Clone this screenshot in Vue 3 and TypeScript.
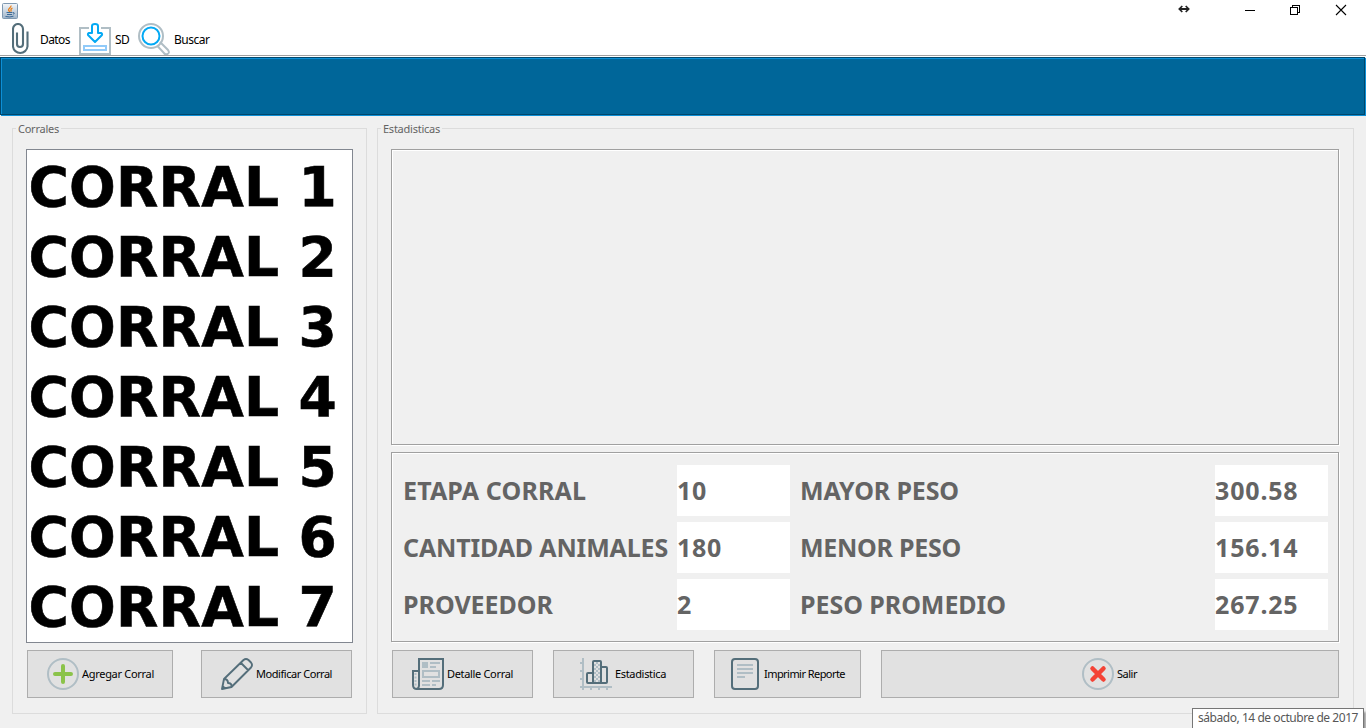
<script setup lang="ts">
import type { Directive } from 'vue'

const corrales = [1, 2, 3, 4, 5, 6, 7].map(n => `CORRAL ${n}`)
const rows = [
  { l: 'ETAPA CORRAL', lw: 183, v: '10', vw: 30, r: 'MAYOR PESO', rw: 159, n: '300.58' },
  { l: 'CANTIDAD ANIMALES', lw: 265, v: '180', vw: 45, r: 'MENOR PESO', rw: 161, n: '156.14' },
  { l: 'PROVEEDOR', lw: 150, v: '2', vw: 15, r: 'PESO PROMEDIO', rw: 206, n: '267.25' },
]

// Adjusts tracking so that a label takes the given width in pixels.
const vFit: Directive<HTMLElement, number> = {
  mounted(el, binding) {
    const natural = el.getBoundingClientRect().width
    const count = (el.textContent ?? '').trim().length
    el.style.letterSpacing = `${(binding.value - natural) / count}px`
  },
}
</script>

<template>
  <div class="window">
    <header class="top">
      <div class="titlebar">
        <svg class="java" width="16" height="16" viewBox="0 0 16 16">
          <defs><linearGradient id="jg" x1="0" y1="0" x2="0" y2="1"><stop offset="0" stop-color="#f4f7fa" /><stop offset="1" stop-color="#9fb4c9" /></linearGradient></defs>
          <rect x=".5" y=".5" width="15" height="15" rx="1" fill="url(#jg)" stroke="#7f98b0" />
          <path d="M9 2.500C9.500 4.500 6 5.300 6.500 7.200Q7 8 8 9M10.500 5C8 6 9 7 9.200 8.500" fill="none" stroke="#e8821e" stroke-width="1.300" />
          <path d="M4.500 9.500h6M5 11.500h5M3.500 13.500q4.500 1 8-.3M11 9.500q2.500 0 .3 2" fill="none" stroke="#3d6a96" />
        </svg>
        <svg class="controls" width="170" height="16" viewBox="1177 2 170 16" fill="none" stroke="#000" shape-rendering="crispEdges">
          <path d="M1180 9h8" stroke="#222" stroke-width="2" />
          <path d="M1182.300 6l-3 3l3 3M1185.700 6l3 3l-3 3" stroke="#222" stroke-width="1.700" shape-rendering="auto" />
          <path d="M1245 10.500h10" />
          <path d="M1290.500 7.500h7v7h-7zM1292.500 7v-1.500h7v7h-1.500" />
          <path d="M1336 5l10 10M1346 5l-10 10" shape-rendering="auto" stroke-width="1.100" />
        </svg>
      </div>
      <nav class="toolbar">
        <span class="tool datos">
          <svg width="18" height="32" viewBox="0 0 18 32" fill="none" stroke="#546e7a" stroke-width="2.100">
            <path d="M5 9.500v11.500a3 3 0 0 0 6 0V6a5 5 0 0 0-10 0v17.500a7.300 7.300 0 0 0 14.500 0V8.500" />
          </svg>
          <b v-fit="30">Datos</b>
        </span>
        <span class="tool sd">
          <svg width="32" height="32" viewBox="0 0 32 32" fill="none" stroke-width="2">
            <path d="M10 5H1v26h30V5h-9" stroke="#b0bec5" />
            <path d="M5 23h22v4H5z" stroke="#90caf9" />
            <path d="M13 10V3q0-2 3-2t3 2v7h3q2 1 .5 2.500L16 19l-6.500-6.500Q8 11 10 10z" stroke="#03a9f4" stroke-linejoin="round" />
          </svg>
          <b v-fit="14">SD</b>
        </span>
        <span class="tool buscar">
          <svg width="32" height="32" viewBox="0 0 32 32" fill="none" stroke-width="2">
            <path d="M22 19l8 8q2 3-.5 4T26 30l-7-7.500" stroke="#b0bec5" />
            <circle cx="13" cy="13" r="12" stroke="#b0bec5" />
            <circle cx="13" cy="13" r="8.500" stroke="#03a9f4" />
          </svg>
          <b v-fit="35.5">Buscar</b>
        </span>
      </nav>
    </header>
    <div class="banner"></div>

    <main>
      <fieldset class="corrales">
        <legend><span v-fit="41">Corrales</span></legend>
        <ul>
          <li v-for="c in corrales" :key="c"><span v-fit="308.5">{{ c }}</span></li>
        </ul>
        <div class="buttons">
          <button class="agregar">
            <svg width="32" height="32" viewBox="0 0 32 32" fill="none">
              <circle cx="16" cy="16" r="15" stroke="#b0bec5" stroke-width="2" />
              <path d="M16 8v16M8 16h16" stroke="#8bc34a" stroke-width="4" stroke-linecap="round" />
            </svg>
            <span v-fit="72">Agregar Corral</span>
          </button>
          <button class="modificar">
            <svg width="32" height="32" viewBox="0 0 32 32" fill="none" stroke="#546e7a" stroke-width="1.900" stroke-linejoin="round">
              <path d="M1 31l2-10L22.500 2q2.500-2 5 0L30 4.500q2 2.500 0 5L10.500 29zM3 21q4 0 4 4q4 0 3.500 4M20 5l7 7M1.500 28l2.500 2.500" />
            </svg>
            <span v-fit="76">Modificar Corral</span>
          </button>
        </div>
      </fieldset>

      <fieldset class="stats">
        <legend><span v-fit="57">Estadisticas</span></legend>
        <section class="chart"></section>
        <section class="data">
          <template v-for="r in rows" :key="r.l">
            <div class="label"><span v-fit="r.lw">{{ r.l }}</span></div>
            <div class="value"><span v-fit="r.vw">{{ r.v }}</span></div>
            <div class="label second"><span v-fit="r.rw">{{ r.r }}</span></div>
            <div class="value"><span v-fit="83.5">{{ r.n }}</span></div>
          </template>
        </section>
        <div class="buttons">
          <button class="detalle">
            <svg width="32" height="32" viewBox="0 0 32 32" fill="none" stroke="#546e7a" stroke-width="2">
              <path d="M7 28V1h24v26q0 4-4 4H5q-4 0-4-4V13h6" />
              <path d="M7 27q0 4-3 4" />
              <path d="M3.500 15v13" stroke="#b0bec5" stroke-dasharray="2 1.500" />
              <path d="M10 4h6v6h-6z" fill="#b0bec5" stroke="none" />
              <path d="M18 5h10M18 9h6M11 13h16v6H11zM10 23h8M20 23h8M10 27h8M20 27h4" stroke="#b0bec5" />
            </svg>
            <span v-fit="66">Detalle Corral</span>
          </button>
          <button class="estadistica">
            <svg width="32" height="32" viewBox="0 0 32 32" fill="none" stroke-width="2">
              <defs><pattern id="checks" width="4" height="4" patternUnits="userSpaceOnUse"><path d="M0 0h2v2H0zM2 2h2v2H2z" fill="#b0bec5" /></pattern></defs>
              <path d="M3 0v32M0 29h32M0 5h3M0 13h3M0 21h3M11 29v3M19 29v3M27 29v3" stroke="#b0bec5" />
              <path d="M14 4h6v21h-6z" fill="url(#checks)" />
              <path d="M13 25V4q0-1 1-1h6q1 0 1 1v21M13 15H8q-1 0-1 1v8q0 1 1 1h18q1 0 1-1V10q0-1-1-1h-5" stroke="#546e7a" />
            </svg>
            <span v-fit="51">Estadistica</span>
          </button>
          <button class="imprimir">
            <svg width="28" height="32" viewBox="0 0 28 32" fill="none" stroke-width="2">
              <rect x="1" y="1" width="26" height="30" rx="3" stroke="#546e7a" />
              <path d="M6 7h16M6 11h16M6 15h16M6 19h8" stroke="#b0bec5" />
            </svg>
            <span v-fit="81">Imprimir Reporte</span>
          </button>
          <button class="salir">
            <svg width="32" height="32" viewBox="0 0 32 32" fill="none">
              <circle cx="16" cy="16" r="15" stroke="#b0bec5" stroke-width="2" />
              <path d="M10.500 10.500l11 11M21.500 10.500l-11 11" stroke="#f44336" stroke-width="4.500" stroke-linecap="round" />
            </svg>
            <span v-fit="20">Salir</span>
          </button>
        </div>
      </fieldset>
    </main>
    <div class="tooltip"><span v-fit="160">sábado, 14 de octubre de 2017</span></div>
  </div>
</template>

<style>
body { margin: 0; overflow: hidden; }
</style>

<style scoped>
* { box-sizing: border-box; }
.window {
  position: relative; width: 1366px; height: 728px; overflow: hidden;
  background: #f0f0f0; display: flex; flex-direction: column;
  font: 11px/14px "Noto Sans", "DejaVu Sans Condensed", sans-serif; color: #000;
}
span, b { white-space: nowrap; }
svg { display: block; flex: none; }
.top { height: 57px; background: #fff; border-bottom: 1px solid #fff; box-shadow: inset 0 -1px #a0a0a0; }
.titlebar { height: 23px; display: flex; justify-content: space-between; }
.java { margin: 3px 0 0 2px; }
.controls { margin: 2px 19px 0 0; }
.toolbar { display: flex; height: 32px; }
.tool { display: flex; align-items: center; }
.tool b { font: 12px/16px "Noto Sans", sans-serif; padding-top: 2px; }
.datos { margin-left: 12px; width: 67px; gap: 10px; }
.sd { width: 59px; gap: 4px; }
.buscar { gap: 4px; }
.banner {
  height: 58px; margin-right: 1px; margin-bottom: 1px; background: #006699;
  border: 1px solid #00476b; box-shadow: 1px 1px #0d8fd6, inset 1px 1px #0d8fd6; flex: none;
}
main { display: flex; flex: 1; padding: 5px 12px 14px; gap: 10px; }
fieldset {
  margin: 0; min-width: 0; padding: 14px 13px 0; border: 1px solid #dcdcdc; height: 593px;
}
legend { height: 14px; line-height: 16px; padding: 0 2px; margin-left: -10px; color: #646464; }
.corrales { width: 355px; }
.stats { width: 977px; }
ul {
  width: 327px; height: 494px; margin: 0; padding: 1px 1.500px; border: 1px solid #828790;
  background: #fff; list-style: none; overflow: hidden;
}
li {
  height: 70px; font: bold 55px/73px "DejaVu Sans", Verdana, sans-serif;
  -webkit-text-stroke: .6px #000;
}
.chart, .data { width: 948px; border: 1px solid #a0a0a0; box-shadow: 1px 1px #fff, inset 1px 1px #fff; }
.chart { height: 296px; }
.data {
  height: 190px; margin-top: 7px; padding: 12px 0 0 11px; display: grid; gap: 6px 0;
  grid-template-columns: 274px 113px 425px 113px; grid-auto-rows: 51px;
  font: bold 25px/50px "Noto Sans", "DejaVu Sans Condensed", sans-serif; color: #646464;
}
.second { padding-left: 10px; }
.value { background: #fff; }
.buttons { display: flex; padding-left: 1px; margin-top: 7px; }
.stats .buttons { margin-top: 8px; gap: 20px; }
button {
  height: 48px; margin: 0; padding: 0; border: 1px solid #adadad; border-radius: 0; background: #e1e1e1;
  display: flex; align-items: center; gap: 4px; font: inherit; color: #000;
}
.agregar { width: 146px; padding-left: 19px; margin-right: 28px; gap: 3px; }
.modificar { width: 151px; padding-left: 19px; gap: 3px; }
.detalle { width: 141px; padding-left: 19px; gap: 3px; }
.estadistica { width: 141px; padding-left: 26px; gap: 3px; }
.imprimir { width: 147px; padding-left: 16px; gap: 5px; }
.salir { width: 458px; padding-left: 200px; gap: 3px; }
.tooltip {
  position: absolute; left: 1192px; top: 708px; width: 172px; height: 22px; padding-left: 5px;
  border: 1px solid #767676; background: #fff; box-shadow: 2px 4px 2px #999;
  font: 12px/18px "Noto Sans", sans-serif; color: #575757;
}
</style>
